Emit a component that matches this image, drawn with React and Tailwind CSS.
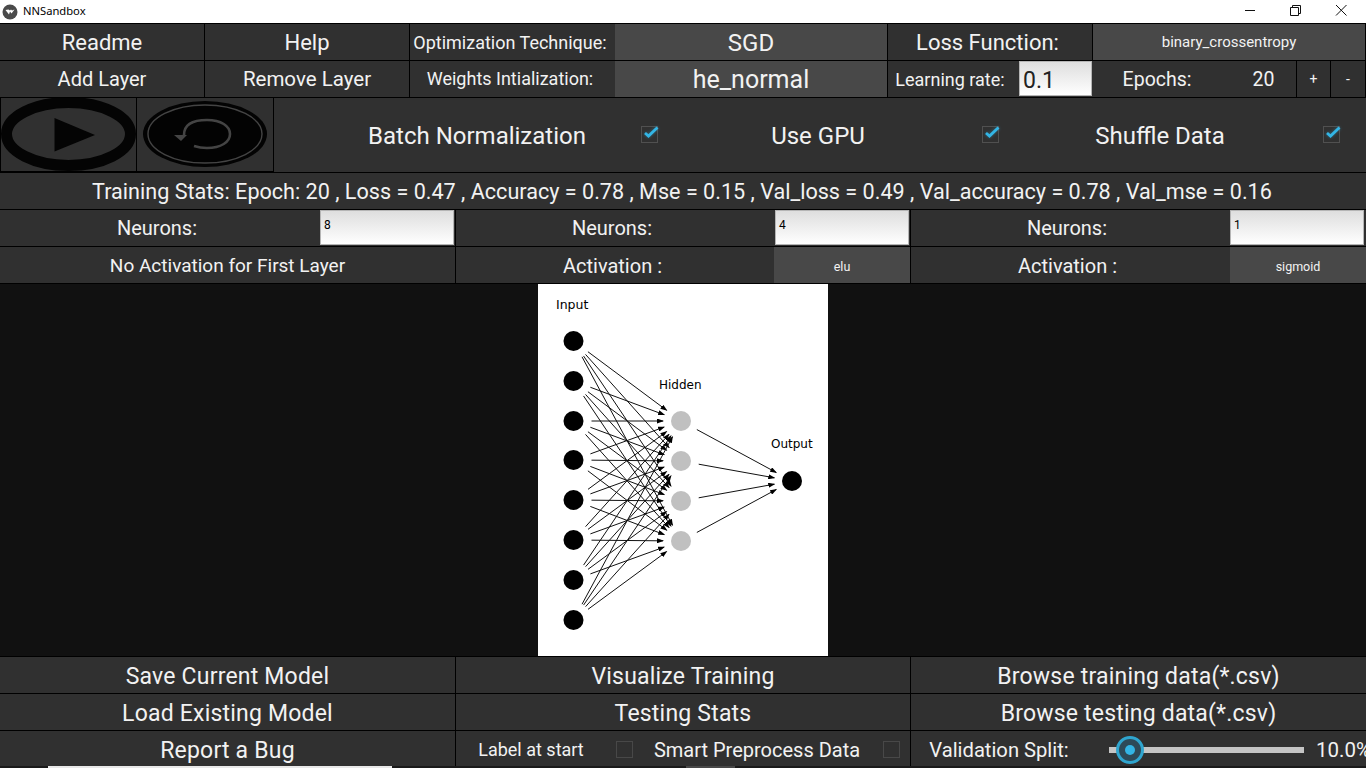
import React from "react";

const Cell = ({ className = "", children }) => (
  <div className={"flex items-center justify-center whitespace-nowrap overflow-hidden box-border h-full text-[#f2f2f2] shrink-0 " + className}>{children}</div>
);

const Row = ({ className = "", children }) => (
  <div className={"flex w-full box-border border-b border-black bg-[#303030] shrink-0 " + className}>{children}</div>
);

const Check = ({ on }) => (
  <svg width="20" height="20" viewBox="0 0 20 20" className="shrink-0 block overflow-visible">
    <rect x="1.5" y="2.5" width="16" height="16" fill="none" stroke={on ? "#505050" : "#484848"} strokeWidth="1" />
    {on && (
      <path d="M5 9 L8.5 12 L17.5 3.5" fill="none" stroke="#33b5e5" strokeWidth="3.5" opacity="0.35" style={{ filter: "blur(1.5px)" }} />
    )}
    {on && <path d="M5 9 L8.5 12 L17.5 3.5" fill="none" stroke="#33b5e5" strokeWidth="2.8" />}
  </svg>
);

const Input = ({ w, className = "", children }) => (
  <div className={"box-border border border-[#b5b5b5] bg-gradient-to-b from-[#dedede] to-white shrink-0 " + w + " " + className}>{children}</div>
);

const inY = [57, 97, 137, 176, 216, 256, 296, 336];
const hidY = [137, 177, 217, 257];

function arrow(x1, y1, x2, y2, key) {
  const d = Math.hypot(x2 - x1, y2 - y1);
  const ux = (x2 - x1) / d;
  const uy = (y2 - y1) / d;
  return (
    <line key={key} x1={x1 + ux * 18} y1={y1 + uy * 18} x2={x2 - ux * 18} y2={y2 - uy * 18} stroke="#111" strokeWidth="1" markerEnd="url(#ah)" />
  );
}

const Network = () => (
  <svg width="290" height="372" viewBox="0 0 290 372" className="block bg-white">
    <defs>
      <marker id="ah" markerUnits="userSpaceOnUse" markerWidth="7" markerHeight="5" refX="6" refY="2.5" orient="auto">
        <path d="M0 0 L7 2.5 L0 5 Z" fill="#000" />
      </marker>
    </defs>
    <text x="18" y="25" fontSize="12.5" fontFamily="DejaVu Sans, sans-serif" fill="#000">Input</text>
    <text x="121" y="104.5" fontSize="12" fontFamily="DejaVu Sans, sans-serif" fill="#000">Hidden</text>
    <text x="233" y="164" fontSize="12" fontFamily="DejaVu Sans, sans-serif" fill="#000">Output</text>
    {inY.flatMap((a, i) => hidY.map((b, j) => arrow(35.5, a, 143, b, "a" + i + j)))}
    {hidY.map((b, j) => arrow(143, b, 254, 197, "b" + j))}
    {inY.map((y) => <circle key={y} cx="35.5" cy={y} r="10" fill="#000" />)}
    {hidY.map((y) => <circle key={y} cx="143" cy={y} r="10" fill="#c0c0c0" />)}
    <circle cx="254" cy="197" r="10" fill="#000" />
  </svg>
);

export default function App() {
  return (
    <div className="w-[1366px] h-[768px] overflow-hidden flex flex-col bg-[#111111] font-['Roboto',sans-serif]">
      {/* Title bar */}
      <div className="h-[24px] shrink-0 box-border border-b border-black bg-white flex items-center pl-[2px]">
        <svg width="16" height="16" viewBox="0 0 16 16" className="shrink-0">
          <circle cx="8" cy="8" r="7.5" fill="#4a4a4a" />
          <path d="M3.5 6 L7 10.5 L8 7.5 L9.5 9.5 L12.5 5.5 L10 6.5 L9 5.5 L8 6.5 L6.5 5.5 Z" fill="#fff" />
        </svg>
        <span className="ml-[5px] text-[11.2px] text-black font-['Noto_Sans',sans-serif]">NNSandbox</span>
        <div className="ml-auto flex items-center h-full">
          <svg width="46" height="23" viewBox="0 0 46 23"><path d="M17 10.5 H27" stroke="#111" fill="none" /></svg>
          <svg width="46" height="23" viewBox="0 0 46 23" className="block">
            <path d="M16.5 7.5 H24.5 V15.5 H16.5 Z M18.5 7.5 V5.5 H26.5 V13.5 H24.5" stroke="#111" fill="none" />
          </svg>
          <svg width="46" height="23" viewBox="0 0 46 23"><path d="M16 5 L26.5 15.5 M26.5 5 L16 15.5" stroke="#111" fill="none" /></svg>
        </div>
      </div>

      <Row className="h-[37px]">
        <Cell className="w-[205px] border-r border-black text-[22px]">Readme</Cell>
        <Cell className="w-[205px] border-r border-black text-[22px]">Help</Cell>
        <Cell className="w-[205px] text-[18px] pr-[5px]">Optimization Technique:</Cell>
        <Cell className="w-[273px] bg-[#484848] border-r border-black text-[24px] pt-[2px]">SGD</Cell>
        <Cell className="w-[205px] border-r border-black text-[22px] pr-[5px]">Loss Function:</Cell>
        <Cell className="flex-1 bg-[#484848] border-r border-black text-[15px]">binary_crossentropy</Cell>
      </Row>
      <Row className="h-[37px]">
        <Cell className="w-[205px] border-r border-black text-[20px]">Add Layer</Cell>
        <Cell className="w-[205px] border-r border-black text-[20.5px]">Remove Layer</Cell>
        <Cell className="w-[205px] text-[18px] pr-[5px] pb-[2px]">Weights Intialization:</Cell>
        <Cell className="w-[273px] bg-[#484848] border-r border-black text-[25px] pt-[2px]">he_normal</Cell>
        <Cell className="w-[131px] text-[18px] pr-[7px]">Learning rate:</Cell>
        <Input w="w-[73px] h-[35px] mr-[1px]" className="text-[23px] pl-[3px] leading-[37px] text-[#222222]">0.1</Input>
        <Cell className="w-[204px] border-r border-black text-[19.5px] gap-[61px] pl-[8px] pt-[2px]"><span>Epochs:</span><span>20</span></Cell>
        <Cell className="w-[34px] border-r border-black text-[14px]">+</Cell>
        <Cell className="flex-1 border-r border-black text-[14px]">-</Cell>
      </Row>

      {/* Controls */}
      <Row className="h-[75px]">
        <div className="w-[137px] h-[74px] box-border border-l border-r border-b border-black shrink-0">
          <svg width="135" height="73" viewBox="0 0 135 73" className="block" preserveAspectRatio="none">
            <ellipse cx="67.5" cy="36" rx="62" ry="31.5" fill="none" stroke="#040404" strokeWidth="11" />
            <path d="M53.5 20 L94 37 L53.5 53.5 Z" fill="#040404" />
          </svg>
        </div>
        <div className="w-[137px] h-[74px] box-border border-r border-b border-black shrink-0">
          <svg width="136" height="73" viewBox="0 0 136 73" className="block">
            <ellipse cx="68" cy="36" rx="62" ry="33" fill="#030303" />
            <ellipse cx="68" cy="36" rx="57" ry="29" fill="none" stroke="#444444" strokeWidth="1.4" />
            <path d="M47 37 C47 26 57 22 70 22 C84 22 93 28 93 36 C93 44 84 50 70 50 C66 50 60 49 57 48" fill="none" stroke="#444444" strokeWidth="2.6" />
            <path d="M37 37 L50 37 L44 43 Z" fill="#444444" />
          </svg>
        </div>
        <div className="flex-1 flex items-center h-full text-[24px] pl-[40px] pb-[2px]">
          <Cell className="w-[326px] pt-[4px]">Batch Normalization</Cell>
          <Check on />
          <Cell className="w-[316px] pt-[4px]">Use GPU</Cell>
          <span className="w-[5px]" />
          <Check on />
          <Cell className="w-[318px] pt-[4px]">Shuffle Data</Cell>
          <span className="w-[3px]" />
          <Check on />
        </div>
      </Row>

      <Row className="h-[37px]">
        <Cell className="w-full text-[21.6px] pt-[2px] pr-[2px]">Training Stats: Epoch: 20 , Loss = 0.47 , Accuracy = 0.78 , Mse = 0.15 , Val_loss = 0.49 , Val_accuracy = 0.78 , Val_mse = 0.16</Cell>
      </Row>

      <Row className="h-[37px]">
        <div className="flex h-full box-border w-[456px] border-r border-black shrink-0">
          <Cell className="w-[320px] text-[20px] pr-[6px]">Neurons:</Cell>
          <Input w="w-[134px] h-[35px]" className="text-[12px] pl-[3px] pt-[7px] leading-[14px] text-black">8</Input>
        </div>
        <div className="flex h-full box-border w-[455px] border-r border-black shrink-0">
          <Cell className="w-[319px] text-[20px] pr-[7px]">Neurons:</Cell>
          <Input w="w-[134px] h-[35px]" className="text-[12px] pl-[3px] pt-[7px] leading-[14px] text-black">4</Input>
        </div>
        <div className="flex h-full box-border flex-1">
          <Cell className="w-[319px] text-[20px] pr-[7px]">Neurons:</Cell>
          <Input w="w-[134px] h-[35px]" className="text-[12px] pl-[3px] pt-[7px] leading-[14px] text-black">1</Input>
        </div>
      </Row>

      <Row className="h-[37px]">
        <Cell className="w-[456px] border-r border-black text-[19px] pt-[2px]">No Activation for First Layer</Cell>
        <div className="flex h-full box-border w-[455px] border-r border-black shrink-0">
          <Cell className="w-[318px] text-[20px] pr-[5px] pt-[2px]">Activation :</Cell>
          <Cell className="flex-1 bg-[#484848] text-[12.5px] pt-[4px]">elu</Cell>
        </div>
        <div className="flex h-full box-border flex-1">
          <Cell className="w-[319px] text-[20px] pr-[6px] pt-[2px]">Activation :</Cell>
          <Cell className="flex-1 bg-[#484848] text-[12.5px] pt-[4px]">sigmoid</Cell>
        </div>
      </Row>

      {/* Canvas */}
      <div className="h-[373px] shrink-0 box-border border-b border-black bg-[#111111] flex justify-center">
        <Network />
      </div>

      <Row className="h-[37px]">
        <Cell className="w-[456px] border-r border-black text-[23px] tracking-[0.2px] pt-[4px]">Save Current Model</Cell>
        <Cell className="w-[455px] border-r border-black text-[23px] tracking-[0.2px] pt-[4px]">Visualize Training</Cell>
        <Cell className="flex-1 text-[23px] tracking-[0.2px] pt-[4px]">Browse training data(*.csv)</Cell>
      </Row>
      <Row className="h-[37px]">
        <Cell className="w-[456px] border-r border-black text-[23px] tracking-[0.2px] pt-[4px]">Load Existing Model</Cell>
        <Cell className="w-[455px] border-r border-black text-[23px] tracking-[0.2px] pt-[4px]">Testing Stats</Cell>
        <Cell className="flex-1 text-[23px] tracking-[0.2px] pt-[4px]">Browse testing data(*.csv)</Cell>
      </Row>
      <div className="h-[35px] shrink-0 flex bg-[#303030]">
        <Cell className="w-[456px] border-r border-black text-[23px] tracking-[0.2px] pt-[6px]">Report a Bug</Cell>
        <div className="w-[455px] h-full box-border border-r border-black flex items-center text-[#f2f2f2] whitespace-nowrap shrink-0">
          <Cell className="w-[150px] text-[18px] pt-[2px]">Label at start</Cell>
          <span className="w-[9px]" />
          <Check />
          <Cell className="w-[247px] text-[20px] pt-[2px] pr-[3px]">Smart Preprocess Data</Cell>
          <Check />
        </div>
        <div className="flex-1 min-w-0 overflow-hidden h-full flex items-center text-[#f2f2f2] whitespace-nowrap pt-[2px]">
          <Cell className="w-[176px] text-[20.2px] pt-[2px]">Validation Split:</Cell>
          <div className="relative w-[195px] ml-[22px] h-[6px] bg-[#c4c4c4] shrink-0">
            <div className="absolute left-[7px] top-[-11px] w-[28px] h-[28px] box-border rounded-full border-[3px] border-[#2fa5cf] bg-[#2d4a58] flex items-center justify-center">
              <div className="w-[10px] h-[10px] rounded-full bg-[#33b5e5]" />
            </div>
          </div>
          <span className="ml-[12px] text-[20.5px] pt-[2px] shrink-0">10.0%</span>
        </div>
      </div>
      {/* Bottom strip */}
      <div className="h-[2px] shrink-0 bg-[#1a1a1a] flex">
        <div className="ml-[48px] w-[344px] bg-[#e8e8e8]" />
        <div className="ml-[294px] w-[49px] bg-[#484848]" />
      </div>
    </div>
  );
}
